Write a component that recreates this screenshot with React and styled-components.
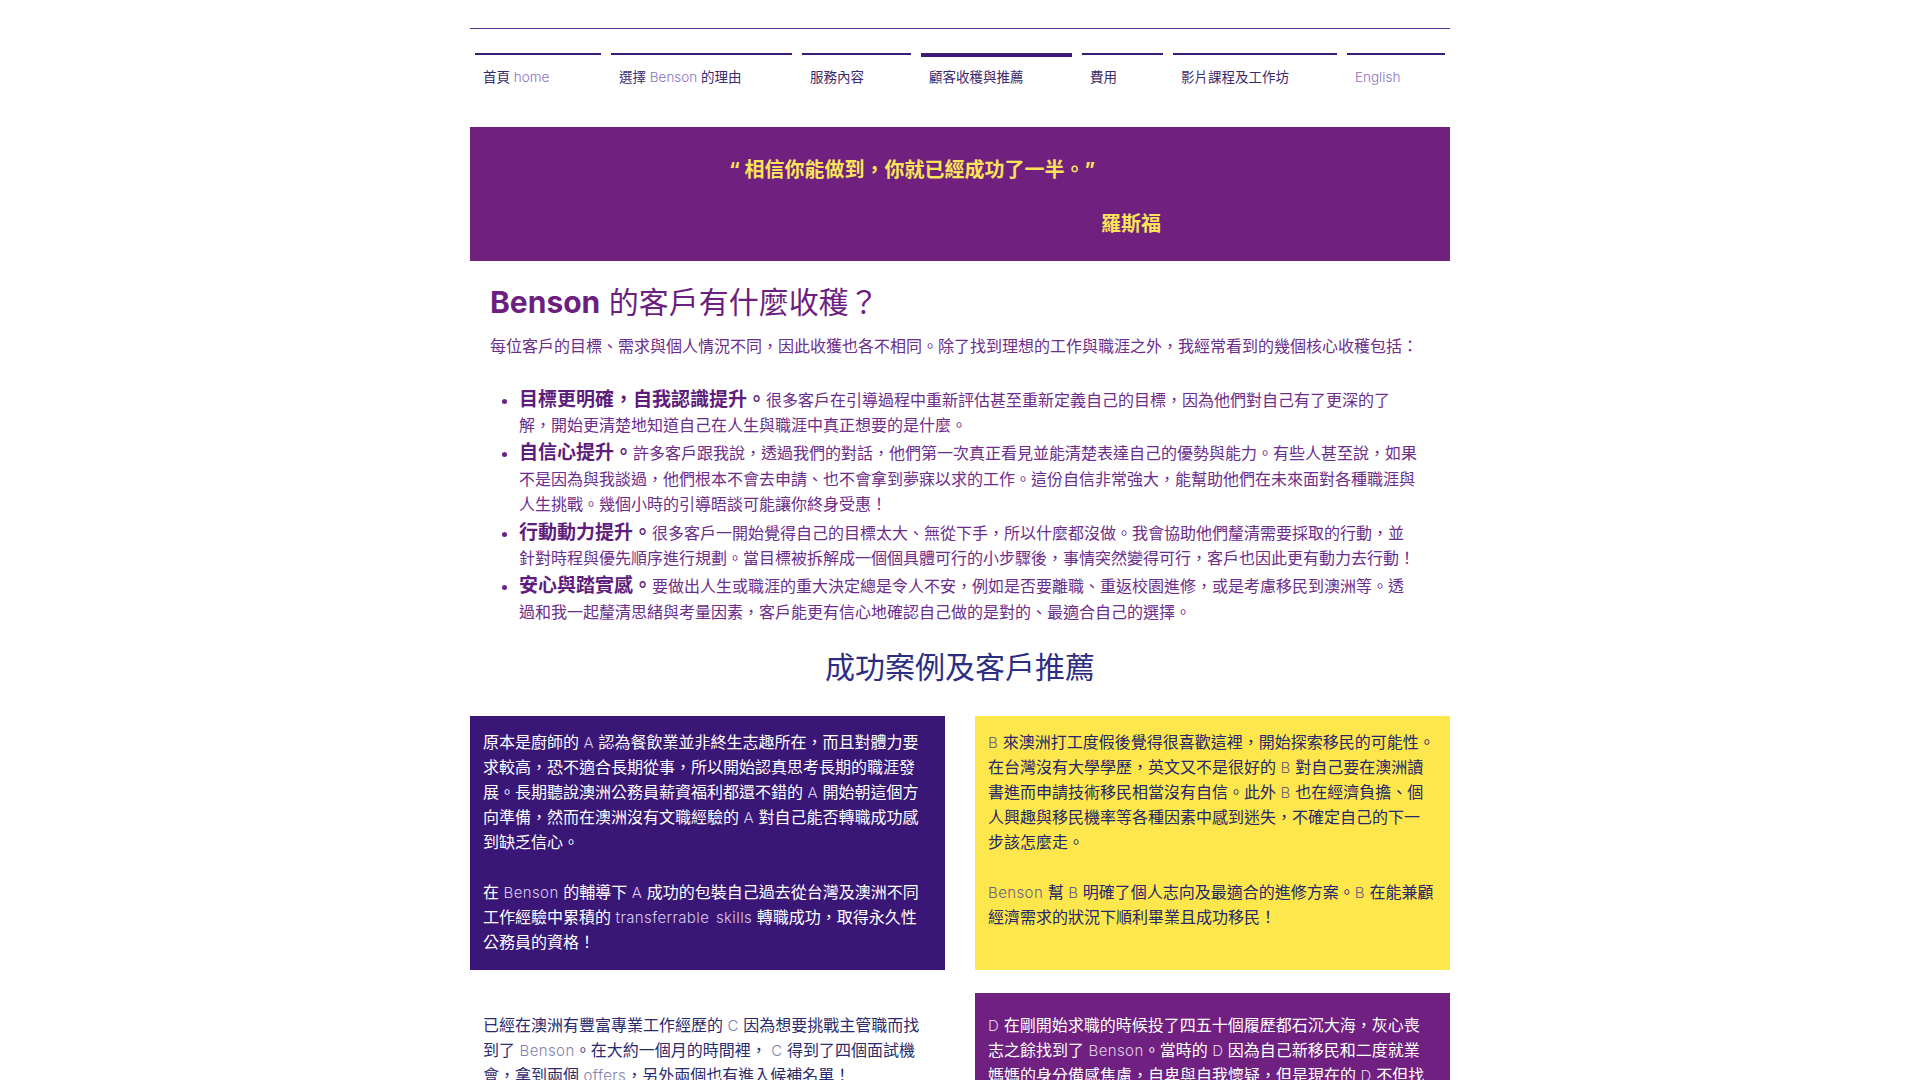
import React from 'react';
import styled, { createGlobalStyle } from 'styled-components';

const GlobalStyle = createGlobalStyle`
  body {
    margin: 0;
    background: #ffffff;
    font-family: Inter, "Noto Sans CJK TC", sans-serif;
  }
`;

// Card colour sets
const cardThemes = {
  indigo: { bg: '#3a1677', text: '#ffffff', latin: '#d8ccf0' },
  yellow: { bg: '#fde74c', text: '#25266b', latin: '#6d6180' },
  white: { bg: '#ffffff', text: '#2a2b6e', latin: '#8282ae' },
  plum: { bg: '#702080', text: '#ffffff', latin: '#e2cdea' },
};

const Page = styled.div`
  width: 980px;
  margin: 0 auto;
  padding-top: 28px;
  padding-bottom: 60px;
`;

const Header = styled.header`
  box-sizing: border-box;
  height: 99px;
  border-top: 1px solid #5b3596;
  padding: 24px 5px 0;
`;

const Nav = styled.nav`
  display: flex;
  gap: 10px;
  align-items: flex-start;
`;

const NavItem = styled.a`
  box-sizing: border-box;
  width: ${({ $w }) => $w}px;
  border-top: ${({ $active }) => ($active ? 4 : 2)}px solid #3b1a78;
  padding: ${({ $active }) => ($active ? 9.5 : 11.5)}px 8px 0;
  font-size: 13.5px;
  line-height: 20px;
  color: #3c2a6e;
  text-decoration: none;
  white-space: nowrap;
`;

const Latin = styled.span`
  font-family: Inter, sans-serif;
  font-weight: 300;
  font-size: 15px;
  letter-spacing: 0.4px;
  word-spacing: 2px;
`;

const NavLatin = styled(Latin)`
  font-size: 13.5px;
  letter-spacing: 0;
  word-spacing: 0;
  color: #8a70bf;
`;

const Banner = styled.section`
  box-sizing: border-box;
  height: 134px;
  background: #70207f;
  padding: 31px 0 0 259px;
  color: #fbe35a;
  font-weight: 700;
  font-size: 20px;
  line-height: 24px;
`;

const Quote = styled.p`
  margin: 0;
`;

const Author = styled.p`
  margin: 30px 0 0 372px;
`;

const Intro = styled.section`
  padding: 21.5px 0 0 20px;
`;

const Heading = styled.h1`
  margin: 0;
  font-size: 30px;
  line-height: 39px;
  font-weight: 400;
  color: #6c1f80;

  b {
    font-weight: 700;
  }
`;

const Lede = styled.p`
  margin: 12px 0 0;
  font-size: 16px;
  line-height: 25px;
  color: #6e2c8c;
`;

const List = styled.ul`
  margin: 29px 0 0;
  padding-left: 29px;
  width: 899px;
  list-style: disc;
`;

const Item = styled.li`
  font-size: 16px;
  line-height: 25.6px;
  margin-bottom: 2.6px;
  color: #6e2c8c;

  &::marker {
    color: #6a2488;
  }
`;

const Lead = styled.strong`
  font-size: 19px;
  line-height: 1;
  font-weight: 700;
  color: #5e1c7c;
`;

const SectionTitle = styled.h2`
  margin: 22.5px 0 28.5px;
  text-align: center;
  font-size: 30px;
  line-height: 39px;
  font-weight: 400;
  color: #2d2e82;
`;

const Cards = styled.div`
  display: grid;
  grid-template-columns: 1fr 1fr;
  column-gap: 30px;
  row-gap: 23px;
`;

const Card = styled.article`
  padding: ${({ $pt }) => $pt}px 15px 14.5px 13px;
  background: ${({ $theme }) => cardThemes[$theme].bg};
  color: ${({ $theme }) => cardThemes[$theme].text};
  font-size: 16px;
  line-height: 25px;

  ${Latin} {
    color: ${({ $theme }) => cardThemes[$theme].latin};
  }

  p {
    margin: 0;
  }

  p + p {
    margin-top: 25px;
  }
`;

const navLinks = [
  { w: 126, label: <>首頁 <NavLatin>home</NavLatin></> },
  { w: 181, label: <>選擇 <NavLatin>Benson</NavLatin> 的理由</> },
  { w: 109, label: <>服務內容</> },
  { w: 151, label: <>顧客收穫與推薦</>, active: true },
  { w: 81, label: <>費用</> },
  { w: 164, label: <>影片課程及工作坊</> },
  { w: 98, label: <NavLatin>English</NavLatin> },
];

const gains = [
  {
    lead: '目標更明確，自我認識提升。',
    text: '很多客戶在引導過程中重新評估甚至重新定義自己的目標，因為他們對自己有了更深的了解，開始更清楚地知道自己在人生與職涯中真正想要的是什麼。',
  },
  {
    lead: '自信心提升。',
    text: '許多客戶跟我說，透過我們的對話，他們第一次真正看見並能清楚表達自己的優勢與能力。有些人甚至說，如果不是因為與我談過，他們根本不會去申請、也不會拿到夢寐以求的工作。這份自信非常強大，能幫助他們在未來面對各種職涯與人生挑戰。幾個小時的引導晤談可能讓你終身受惠！',
  },
  {
    lead: '行動動力提升。',
    text: '很多客戶一開始覺得自己的目標太大、無從下手，所以什麼都沒做。我會協助他們釐清需要採取的行動，並針對時程與優先順序進行規劃。當目標被拆解成一個個具體可行的小步驟後，事情突然變得可行，客戶也因此更有動力去行動！',
  },
  {
    lead: '安心與踏實感。',
    text: '要做出人生或職涯的重大決定總是令人不安，例如是否要離職、重返校園進修，或是考慮移民到澳洲等。透過和我一起釐清思緒與考量因素，客戶能更有信心地確認自己做的是對的、最適合自己的選擇。',
  },
];

export default function App() {
  return (
    <>
      <GlobalStyle />
      <Page>
        <Header>
          <Nav>
            {navLinks.map((link, i) => (
              <NavItem key={i} $w={link.w} $active={link.active}>
                {link.label}
              </NavItem>
            ))}
          </Nav>
        </Header>

        <Banner>
          <Quote>“ 相信你能做到，你就已經成功了一半。”</Quote>
          <Author>羅斯福</Author>
        </Banner>

        <Intro>
          <Heading>
            <b>Benson</b> 的客戶有什麼收穫？
          </Heading>
          <Lede>
            每位客戶的目標、需求與個人情況不同，因此收獲也各不相同。除了找到理想的工作與職涯之外，我經常看到的幾個核心收穫包括：
          </Lede>
          <List>
            {gains.map((g) => (
              <Item key={g.lead}>
                <Lead>{g.lead}</Lead>
                {g.text}
              </Item>
            ))}
          </List>
        </Intro>

        <SectionTitle>成功案例及客戶推薦</SectionTitle>

        <Cards>
          <Card $theme="indigo" $pt={14.5}>
            <p>
              原本是廚師的 <Latin>A</Latin> 認為餐飲業並非終生志趣所在，而且對體力要求較高，恐不適合長期從事，所以開始認真思考長期的職涯發展。長期聽說澳洲公務員薪資福利都還不錯的 <Latin>A</Latin> 開始朝這個方向準備，然而在澳洲沒有文職經驗的 <Latin>A</Latin> 對自己能否轉職成功感到缺乏信心。
            </p>
            <p>
              在 <Latin>Benson</Latin> 的輔導下 <Latin>A</Latin> 成功的包裝自己過去從台灣及澳洲不同工作經驗中累積的 <Latin>transferrable skills</Latin> 轉職成功，取得永久性公務員的資格！
            </p>
          </Card>
          <Card $theme="yellow" $pt={14.5}>
            <p>
              <Latin>B</Latin> 來澳洲打工度假後覺得很喜歡這裡，開始探索移民的可能性。在台灣沒有大學學歷，英文又不是很好的 <Latin>B</Latin> 對自己要在澳洲讀書進而申請技術移民相當沒有自信。此外 <Latin>B</Latin> 也在經濟負擔、個人興趣與移民機率等各種因素中感到迷失，不確定自己的下一步該怎麼走。
            </p>
            <p>
              <Latin>Benson</Latin> 幫 <Latin>B</Latin> 明確了個人志向及最適合的進修方案。<Latin>B</Latin> 在能兼顧經濟需求的狀況下順利畢業且成功移民！
            </p>
          </Card>
          <Card $theme="white" $pt={20.5}>
            <p>
              已經在澳洲有豐富專業工作經歷的 <Latin>C</Latin> 因為想要挑戰主管職而找到了 <Latin>Benson</Latin>。在大約一個月的時間裡， <Latin>C</Latin> 得到了四個面試機會，拿到兩個 <Latin>offers</Latin>，另外兩個也有進入候補名單！
            </p>
          </Card>
          <Card $theme="plum" $pt={20.5}>
            <p>
              <Latin>D</Latin> 在剛開始求職的時候投了四五十個履歷都石沉大海，灰心喪志之餘找到了 <Latin>Benson</Latin>。當時的 <Latin>D</Latin> 因為自己新移民和二度就業媽媽的身分備感焦慮，自卑與自我懷疑，但是現在的 <Latin>D</Latin> 不但找到了理想的工作，也重新找回了對自己的信心！
            </p>
          </Card>
        </Cards>
      </Page>
    </>
  );
}
